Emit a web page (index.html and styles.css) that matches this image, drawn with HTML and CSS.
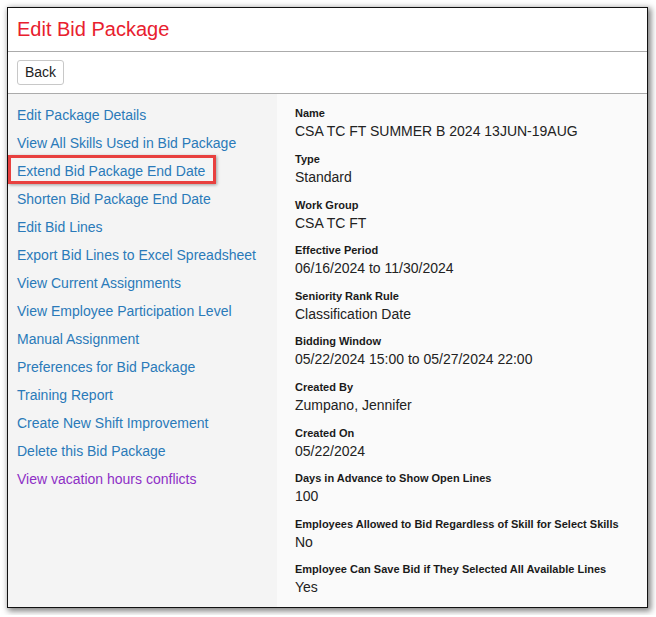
FILE: index.html
```html
<!DOCTYPE html>
<html>
<head>
<meta charset="utf-8">
<link rel="stylesheet" href="styles.css">
</head>
<body>
<div class="window">
  <div class="header"><h1 class="title">Edit Bid Package</h1></div>
  <div class="toolbar"><button class="btn">Back</button></div>
  <div class="content">
    <nav class="sidebar">
      <a class="link" href="#">Edit Package Details</a>
      <a class="link" href="#">View All Skills Used in Bid Package</a>
      <a class="link highlighted" href="#">Extend Bid Package End Date<span class="callout"></span></a>
      <a class="link" href="#">Shorten Bid Package End Date</a>
      <a class="link" href="#">Edit Bid Lines</a>
      <a class="link" href="#">Export Bid Lines to Excel Spreadsheet</a>
      <a class="link" href="#">View Current Assignments</a>
      <a class="link" href="#">View Employee Participation Level</a>
      <a class="link" href="#">Manual Assignment</a>
      <a class="link" href="#">Preferences for Bid Package</a>
      <a class="link" href="#">Training Report</a>
      <a class="link" href="#">Create New Shift Improvement</a>
      <a class="link" href="#">Delete this Bid Package</a>
      <a class="link visited" href="#">View vacation hours conflicts</a>
    </nav>
    <div class="details">
      <div class="field"><div class="label">Name</div><div class="value">CSA TC FT SUMMER B 2024 13JUN-19AUG</div></div>
      <div class="field"><div class="label">Type</div><div class="value">Standard</div></div>
      <div class="field"><div class="label">Work Group</div><div class="value">CSA TC FT</div></div>
      <div class="field"><div class="label">Effective Period</div><div class="value">06/16/2024 to 11/30/2024</div></div>
      <div class="field"><div class="label">Seniority Rank Rule</div><div class="value">Classification Date</div></div>
      <div class="field"><div class="label">Bidding Window</div><div class="value">05/22/2024 15:00 to 05/27/2024 22:00</div></div>
      <div class="field"><div class="label">Created By</div><div class="value">Zumpano, Jennifer</div></div>
      <div class="field"><div class="label">Created On</div><div class="value">05/22/2024</div></div>
      <div class="field"><div class="label">Days in Advance to Show Open Lines</div><div class="value">100</div></div>
      <div class="field"><div class="label">Employees Allowed to Bid Regardless of Skill for Select Skills</div><div class="value">No</div></div>
      <div class="field"><div class="label">Employee Can Save Bid if They Selected All Available Lines</div><div class="value">Yes</div></div>
    </div>
  </div>
</div>
</body>
</html>
```

FILE: styles.css
```css
* { box-sizing: border-box; }
html, body { margin: 0; padding: 0; background: #fff; }
body {
  padding: 7px;
  font-family: "Liberation Sans", Arial, sans-serif;
  color: #222;
}
.window {
  width: 641px;
  height: 601px;
  border: 1px solid #111;
  background: #fff;
  box-shadow: 2px 2px 6px 1px rgba(0,0,0,0.5);
  display: flex;
  flex-direction: column;
  overflow: hidden;
}
.header {
  padding: 10px 9px;
  border-bottom: 1px solid #ababab;
}
.title {
  margin: 0;
  font-size: 20px;
  line-height: 23px;
  font-weight: normal;
  color: #e8202e;
}
.toolbar {
  padding: 8px 9px;
  border-bottom: 1px solid #ababab;
}
.btn {
  display: block;
  font-family: "Liberation Sans", Arial, sans-serif;
  font-size: 14px;
  line-height: 17px;
  height: 25px;
  padding: 3px 7px;
  color: #222;
  background: #fff;
  border: 1px solid #c8c8c8;
  border-radius: 3px;
}
.content {
  flex: 1;
  display: flex;
}
.sidebar {
  width: 269px;
  background: #f4f4f4;
  padding: 11.4px 9px 0;
  display: flex;
  flex-direction: column;
  align-items: flex-start;
}
.link {
  display: block;
  position: relative;
  font-size: 14px;
  line-height: 20px;
  margin-bottom: 8px;
  color: #2a7ab9;
  text-decoration: none;
}
.link.visited { color: #8e2fc6; }
.callout {
  position: absolute;
  left: -9px;
  top: -6px;
  width: 208px;
  height: 29px;
  border: 3px solid #e8403f;
  box-shadow: 1px 1px 3px rgba(0,0,0,0.35);
}
.details {
  flex: 1;
  background: #fafafa;
  padding: 11.4px 10px 0 18px;
}
.field { margin-bottom: 9.6px; }
.label {
  font-size: 11px;
  line-height: 16px;
  font-weight: bold;
  color: #1a1a1a;
}
.value {
  font-size: 14px;
  line-height: 20px;
  color: #222;
}
```
